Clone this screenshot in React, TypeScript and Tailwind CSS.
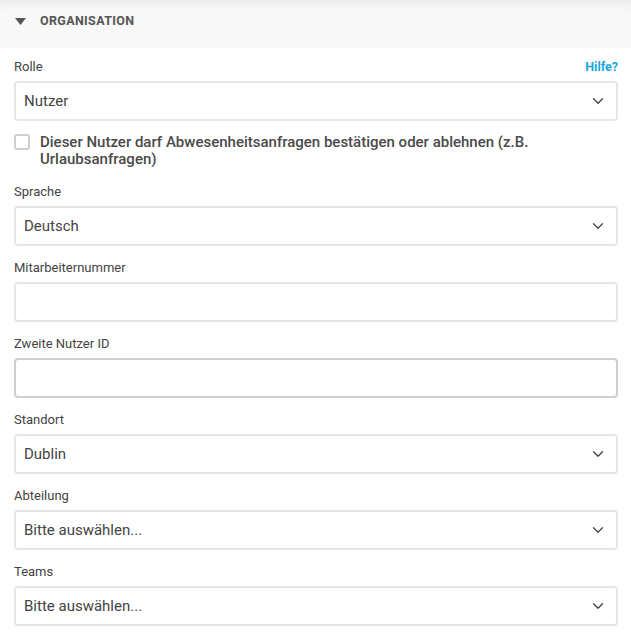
import { ChevronDown } from 'lucide-react'

function Label({ children }: { children: React.ReactNode }) {
  return <div className="text-[13px] leading-[16px] font-normal text-[#444] mb-[6px]">{children}</div>
}

function Select({ value }: { value: string }) {
  return (
    <div className="h-10 border-2 border-[#e6e6e6] rounded-[4px] bg-white flex items-center justify-between pl-[8px] pr-[9px]">
      <span className="text-[15px] font-normal text-[#444]">{value}</span>
      <ChevronDown className="w-[18px] h-[18px] text-[#444]" strokeWidth={1.7} />
    </div>
  )
}

function Input({ dark }: { dark?: boolean }) {
  return (
    <div className={`h-10 border-2 rounded-[4px] bg-white ${dark ? 'border-[#cfcfcf]' : 'border-[#e6e6e6]'}`} />
  )
}

export default function App() {
  return (
    <div className="w-[631px] h-[634px] bg-white overflow-hidden" style={{ fontFamily: 'Roboto, "Noto Sans", sans-serif' }}>
      {/* Section header */}
      <div className="h-12 bg-[#f8f8f8] shadow-[inset_0_10px_12px_-8px_rgba(0,0,0,0.08)] flex items-center px-[15px] gap-[14px] pb-[5px]">
        <svg width="11" height="8" viewBox="0 0 11 8">
          <polygon points="0,0 11,0 5.5,7" fill="#555" />
        </svg>
        <span className="text-[12.5px] font-bold text-[#555] tracking-[0.35px]">ORGANISATION</span>
      </div>

      <div className="pl-[14px] pr-[13px] pt-[11px]">
        <div className="flex justify-between">
          <Label>Rolle</Label>
          <a className="text-[12.5px] leading-[16px] font-bold text-[#1aa6dc]">Hilfe?</a>
        </div>
        <Select value="Nutzer" />

        <div className="flex gap-[10px] mt-[12px] mb-[16px]">
          <div className="w-4 h-4 shrink-0 border-2 border-[#cfcfcf] rounded-[3px] mt-[1px]" />
          <div className="text-[15px] leading-[17px] font-medium text-[#4a4a4a] pt-[1px]">
            Dieser Nutzer darf Abwesenheitsanfragen bestätigen oder ablehnen (z.B. Urlaubsanfragen)
          </div>
        </div>

        <div className="mb-[14px]">
          <Label>Sprache</Label>
          <Select value="Deutsch" />
        </div>
        <div className="mb-[14px]">
          <Label>Mitarbeiternummer</Label>
          <Input />
        </div>
        <div className="mb-[14px]">
          <Label>Zweite Nutzer ID</Label>
          <Input dark />
        </div>
        <div className="mb-[14px]">
          <Label>Standort</Label>
          <Select value="Dublin" />
        </div>
        <div className="mb-[14px]">
          <Label>Abteilung</Label>
          <Select value="Bitte auswählen..." />
        </div>
        <div className="mb-[14px]">
          <Label>Teams</Label>
          <Select value="Bitte auswählen..." />
        </div>
      </div>
    </div>
  )
}
